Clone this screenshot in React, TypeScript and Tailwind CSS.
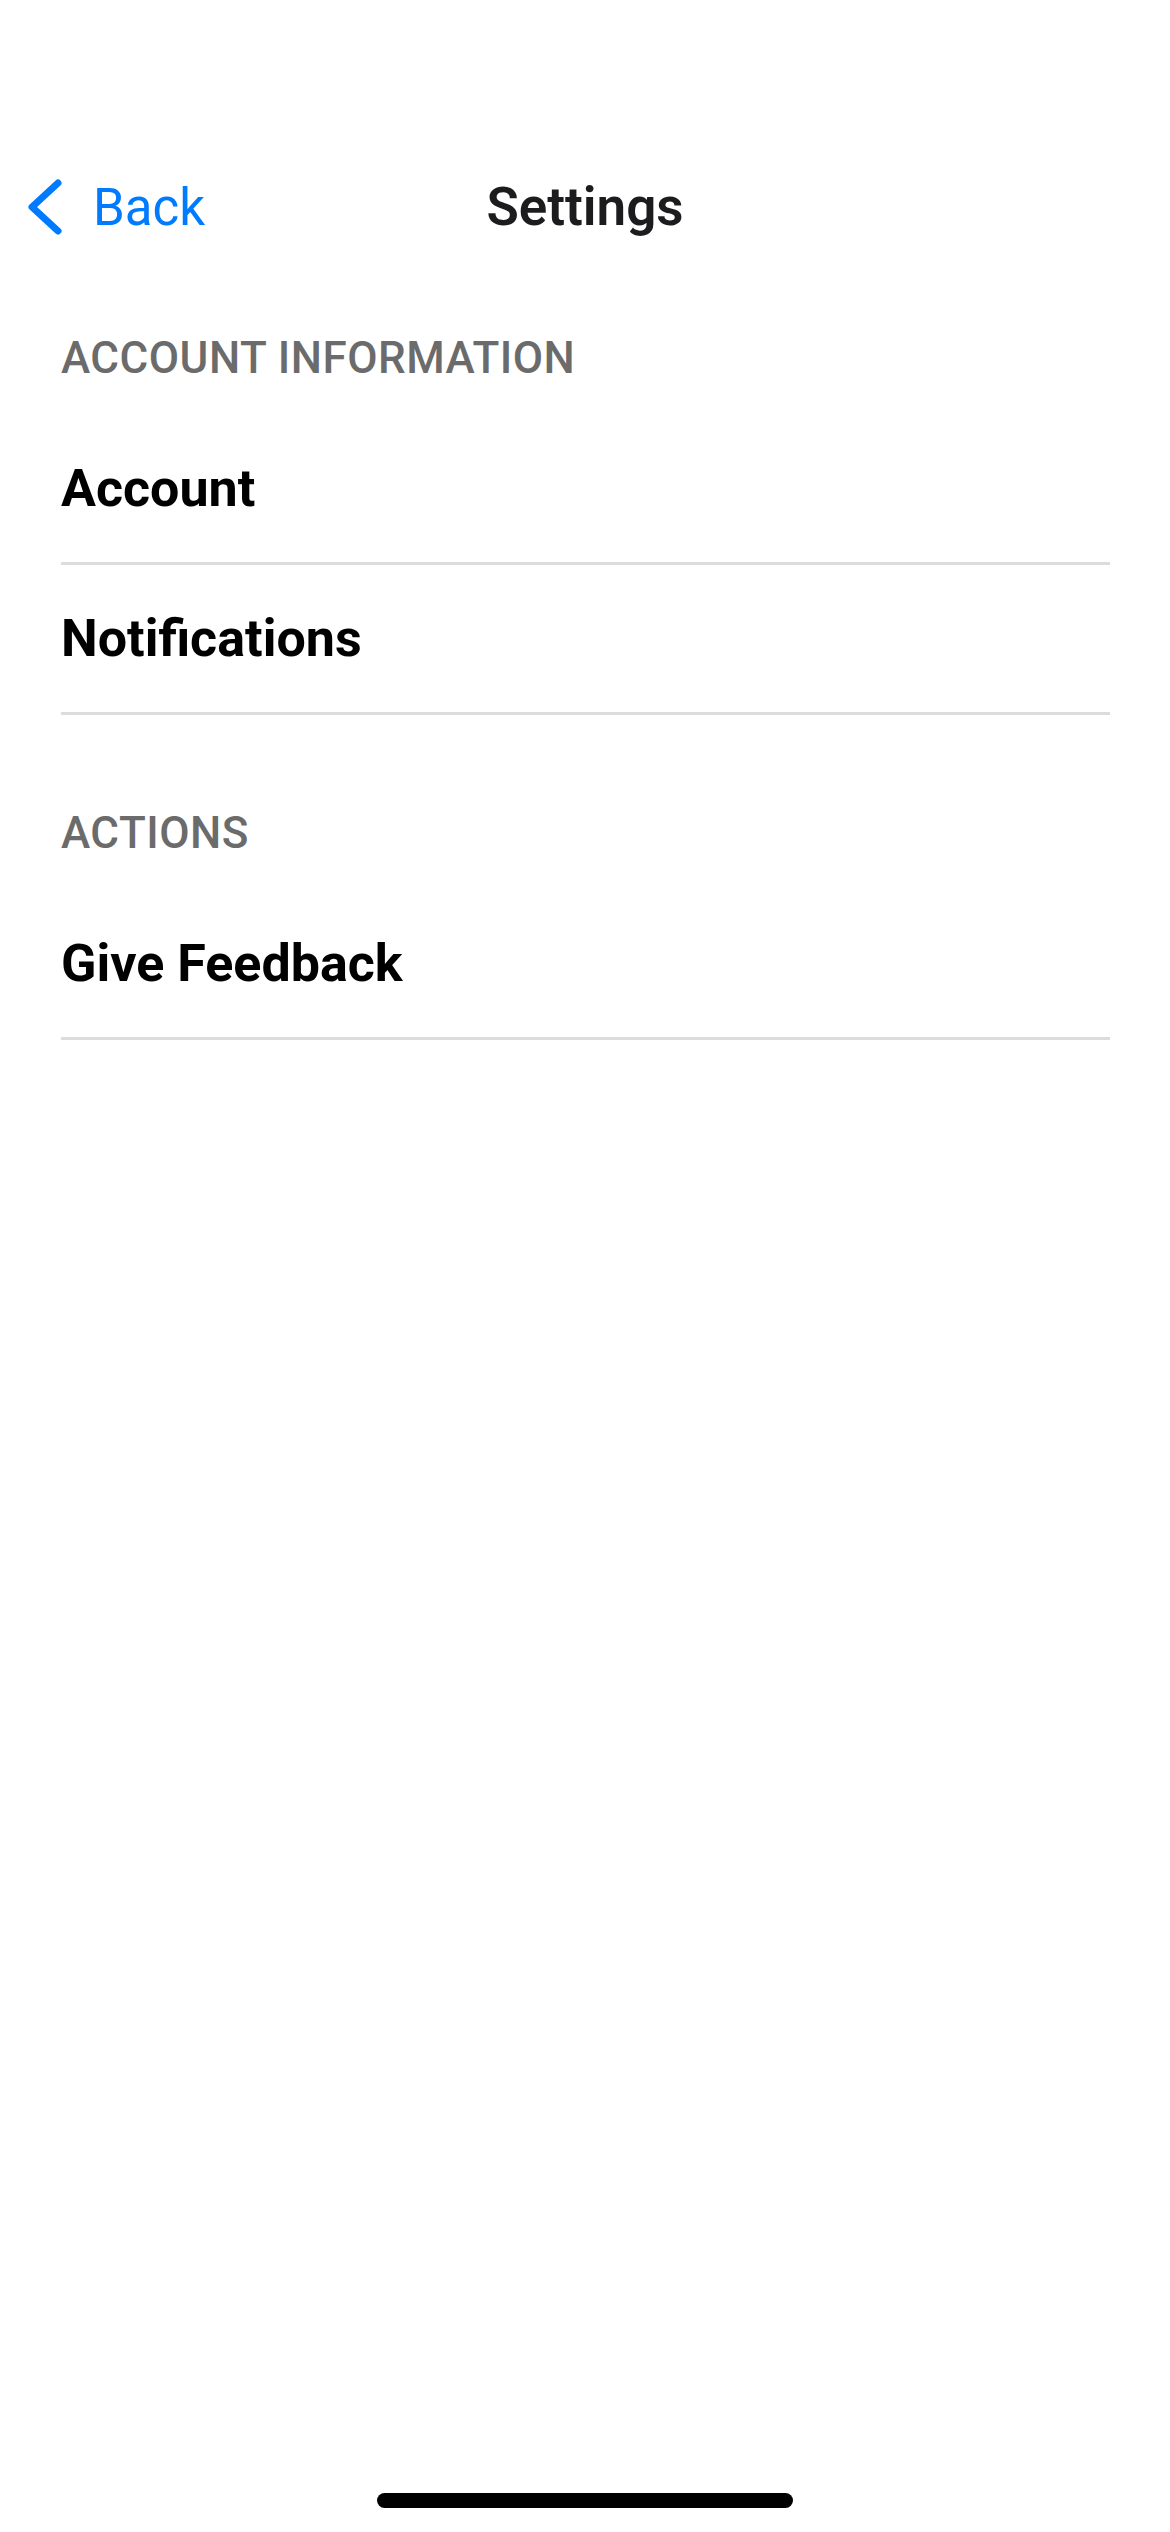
import React from 'react';

interface SettingsSection {
  title: string;
  items: string[];
}

const sections: SettingsSection[] = [
  { title: 'ACCOUNT INFORMATION', items: ['Account', 'Notifications'] },
  { title: 'ACTIONS', items: ['Give Feedback'] },
];

const BackChevron: React.FC = () => (
  <svg width="36" height="56" viewBox="0 0 36 56" fill="none" aria-hidden="true">
    <path
      d="M31 4 L5 28 L31 52"
      stroke="#007AFF"
      strokeWidth="7"
      strokeLinecap="round"
      strokeLinejoin="round"
    />
  </svg>
);

const NavBar: React.FC = () => (
  <div className="grid grid-cols-[1fr_auto_1fr] items-center h-[150px]">
    <button className="flex items-center gap-[30px] pl-[27px] text-[#007AFF] text-[51px] leading-none font-normal">
      <BackChevron />
      <span>Back</span>
    </button>
    <h1 className="text-[53px] leading-none font-semibold text-[#1c1c1e]">Settings</h1>
    <div />
  </div>
);

const SectionBlock: React.FC<{ section: SettingsSection; className: string }> = ({
  section,
  className,
}) => (
  <section className={className}>
    <h2 className="px-[61px] text-[44px] leading-[44px] font-medium tracking-[0.5px] text-[#6b6b6b] mb-[35px]">
      {section.title}
    </h2>
    <ul className="mx-[61px] mr-[60px]">
      {section.items.map((item) => (
        <li
          key={item}
          className="flex items-center h-[150px] pt-[1px] border-b-[3px] border-[#dcdcdc] text-[52px] font-bold text-black"
        >
          {item}
        </li>
      ))}
    </ul>
  </section>
);

export default function App() {
  return (
    <div
      className="min-h-screen flex flex-col bg-white"
      style={{ fontFamily: 'Roboto, "Liberation Sans", sans-serif' }}
    >
      <div className="flex-1 pt-[132px]">
        <NavBar />
        <SectionBlock section={sections[0]} className="pt-[54px]" />
        <SectionBlock section={sections[1]} className="pt-[96px]" />
      </div>
      <div className="flex justify-center pb-[24px]">
        <div className="w-[416px] h-[15px] rounded-full bg-black" />
      </div>
    </div>
  );
}
